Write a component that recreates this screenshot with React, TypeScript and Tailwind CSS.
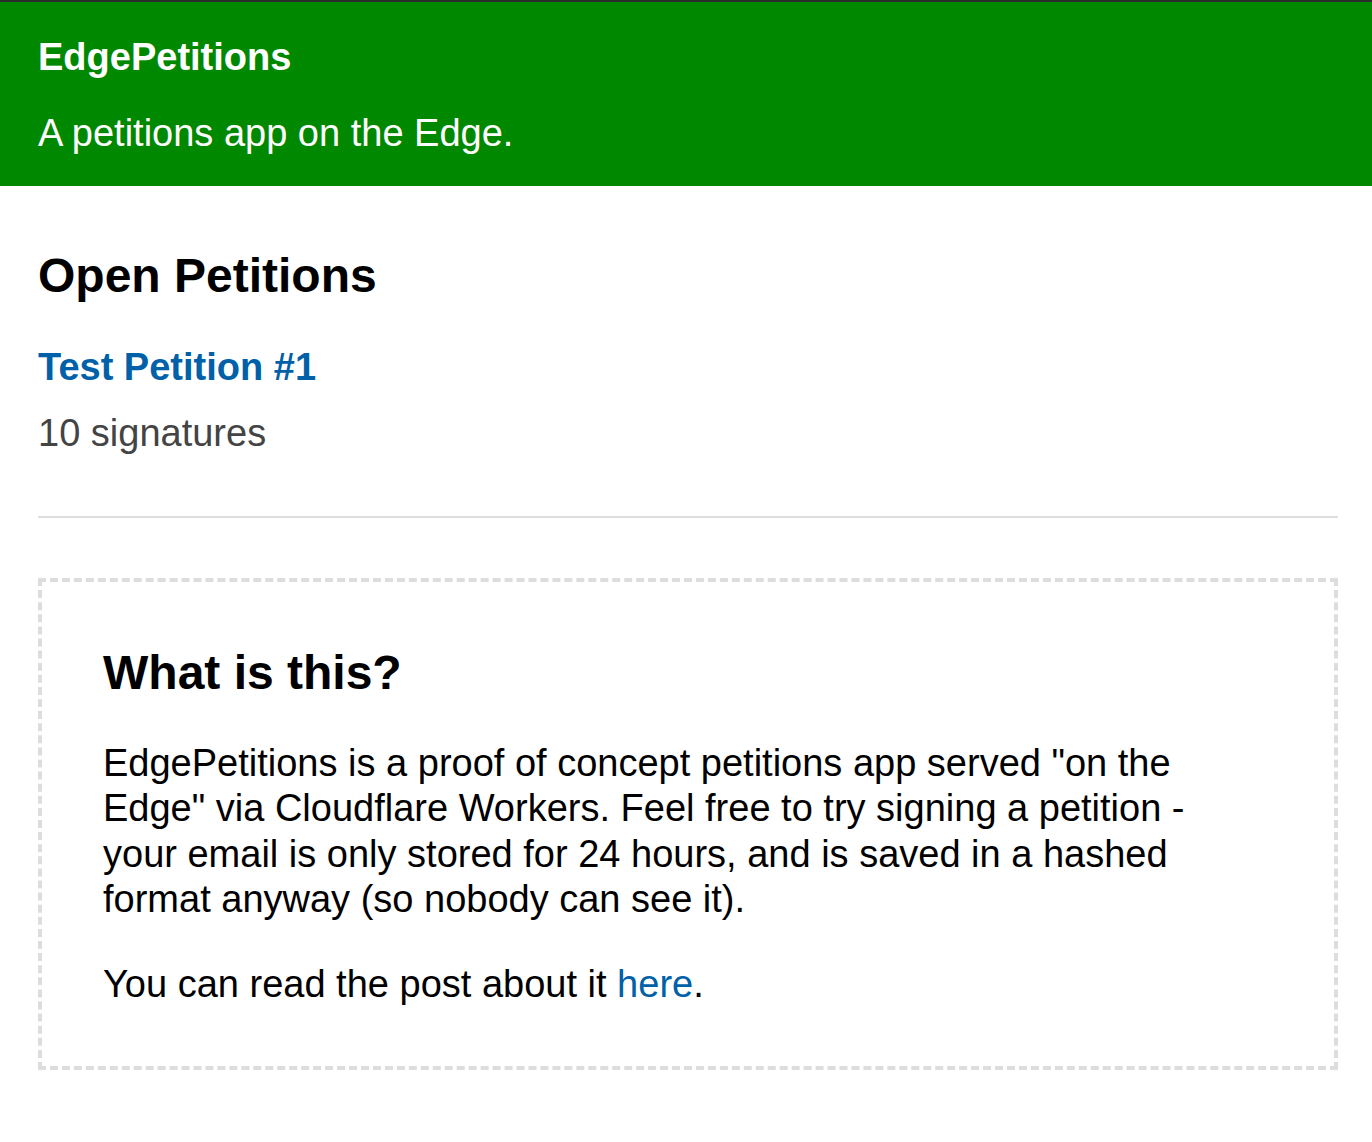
import React from 'react'

const font = { fontFamily: '"Liberation Sans", Arial, Helvetica, sans-serif' }

function Header() {
  return (
    <header className="border-t-2 border-[#2b2b2b] bg-[#008800] px-[38px] pt-[33px] pb-[30px] text-white">
      <h1 className="text-[38px] font-bold leading-[1.2]">EdgePetitions</h1>
      <p className="mt-[30px] text-[38px] leading-[1.2]">A petitions app on the Edge.</p>
    </header>
  )
}

function PetitionItem({ title, signatures }: { title: string; signatures: number }) {
  return (
    <div className="mt-[40px]">
      <a href="#" className="text-[38px] font-bold leading-[1.2] text-[#0060a8]">
        {title}
      </a>
      <p className="mt-[21px] text-[38px] leading-[1.2] text-[#444444]">{signatures} signatures</p>
    </div>
  )
}

export default function App() {
  return (
    <div className="min-h-screen bg-white text-black" style={font}>
      <Header />

      <main className="pl-[38px] pr-[34px] pb-[60px]">
        {/* Open petitions list */}
        <section className="pt-[61px]">
          <h2 className="text-[48px] font-bold leading-[1.2]">Open Petitions</h2>
          <PetitionItem title="Test Petition #1" signatures={10} />
        </section>

        <hr className="mt-[59px] border-t-2 border-[#dddddd]" />

        {/* About box */}
        <section className="mt-[60px] border-4 border-dashed border-[#dddddd] px-[61px] pt-[62px] pb-[58px]">
          <h2 className="text-[48px] font-bold leading-[1.2]">What is this?</h2>
          <p className="mt-[39px] max-w-[1100px] text-[38px] leading-[1.2]">
            EdgePetitions is a proof of concept petitions app served "on the Edge" via Cloudflare
            Workers. Feel free to try signing a petition - your email is only stored for 24 hours,
            and is saved in a hashed format anyway (so nobody can see it).
          </p>
          <p className="mt-[39px] text-[38px] leading-[1.2]">
            You can read the post about it{' '}
            <a href="#" className="text-[#0060a8]">
              here
            </a>
            .
          </p>
        </section>
      </main>
    </div>
  )
}
